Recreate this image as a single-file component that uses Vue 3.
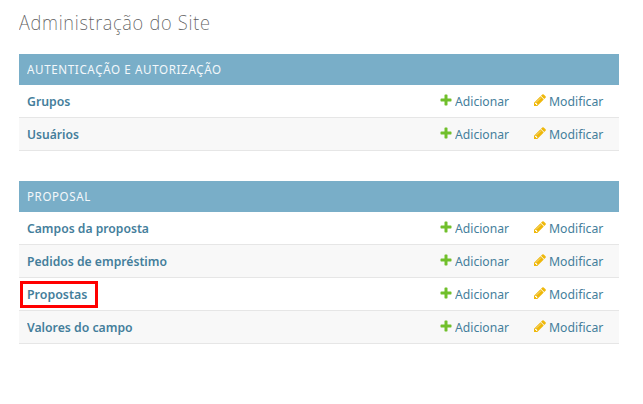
<script setup>
const modules = [
  { caption: 'Autenticação e Autorização', key: 'auth', rows: [
    { name: 'Grupos', key: 'grupos' }, { name: 'Usuários', key: 'usuarios' }] },
  { caption: 'Proposal', key: 'proposal', rows: [
    { name: 'Campos da proposta', key: 'campos' },
    { name: 'Pedidos de empréstimo', key: 'pedidos' },
    { name: 'Propostas', key: 'propostas', marked: true },
    { name: 'Valores do campo', key: 'valores' }] }
]
</script>

<template>
  <main class="page">
    <h1><span>Administração do Site</span></h1>
    <section v-for="m in modules" :key="m.key" class="module">
      <h2><span :class="'cap-' + m.key">{{ m.caption }}</span></h2>
      <div v-for="r in m.rows" :key="r.key" class="row">
        <div class="name" :class="{ marked: r.marked }"><span :class="'name-' + r.key">{{ r.name }}</span></div>
        <a class="action add">
          <svg viewBox="0 0 1792 1792"><path fill="#70bf2b" d="M1600 796v192q0 40-28 68t-68 28h-416v416q0 40-28 68t-68 28h-192q-40 0-68-28t-28-68v-416h-416q-40 0-68-28t-28-68v-192q0-40 28-68t68-28h416v-416q0-40 28-68t68-28h192q40 0 68 28t28 68v416h416q40 0 68 28t28 68z"/></svg>
          <span>Adicionar</span>
        </a>
        <a class="action change">
          <svg viewBox="0 0 1792 1792"><path fill="#efb80b" d="M491 1536l91-91-235-235-91 91v107h128v128h107zm523-928q0-22-22-22-10 0-17 7l-542 542q-7 7-7 17 0 22 22 22 10 0 17-7l542-542q7-7 7-17zm-54-192l416 416-832 832h-416v-416zm683 96q0 53-37 90l-166 166-416-416 166-165q36-38 90-38 53 0 91 38l235 234q37 39 37 91z"/></svg>
          <span>Modificar</span>
        </a>
      </div>
    </section>
  </main>
</template>

<style>
body { background: #fff; }
</style>

<style scoped>
.page {
  box-sizing: border-box;
  width: 643px;
  height: 404px;
  padding: 8px 24px 0 19px;
  font-family: "Noto Sans", "Open Sans", sans-serif;
  font-size: 13px;
  color: #447e9b;
}
span { display: inline-block; transform-origin: 0 50%; }
h1 {
  margin: 0 0 16px;
  height: 30px;
  line-height: 30px;
  font-size: 20px;
  font-weight: 200;
  color: #5c5c5c;
  white-space: nowrap;
}
h1 span { letter-spacing: 0.8px; transform: scaleX(0.914); }
.module { margin-bottom: 30px; }
h2 {
  margin: 0;
  height: 31px;
  padding-left: 8px;
  background: #79aec8;
  color: #f4f8fb;
  font-size: 12px;
  line-height: 31px;
  font-weight: 400;
  letter-spacing: 0.65px;
  text-transform: uppercase;
}
.cap-auth { transform: scaleX(0.967); }
.cap-proposal { transform: scaleX(0.96); }
.row {
  box-sizing: border-box;
  height: 33px;
  display: grid;
  grid-template-columns: 420px 94px 86px;
  align-items: center;
  border-bottom: 1px solid #e6e6e6;
  line-height: 18px;
  white-space: nowrap;
}
.row:nth-child(odd) { background: #f8f8f8; }
.name { padding-left: 8px; font-weight: 600; }
.name-grupos { transform: scaleX(0.945); }
.name-usuarios { transform: scaleX(0.93); }
.name-campos { transform: scaleX(0.935); }
.name-pedidos { transform: scaleX(0.936); }
.name-propostas { transform: scaleX(0.953); }
.name-valores { transform: scaleX(0.94); }
.marked { position: relative; }
.marked::after {
  content: "";
  position: absolute;
  left: 0.5px;
  top: -4px;
  width: 72px;
  height: 21px;
  border: 3px solid #f00;
}
.action { display: flex; align-items: center; }
.action svg { width: 14px; height: 14px; flex: none; margin: 0 2px 2px -0.5px; }
.add span { transform: scaleX(0.935); }
.change span { transform: scaleX(0.942); }
</style>
